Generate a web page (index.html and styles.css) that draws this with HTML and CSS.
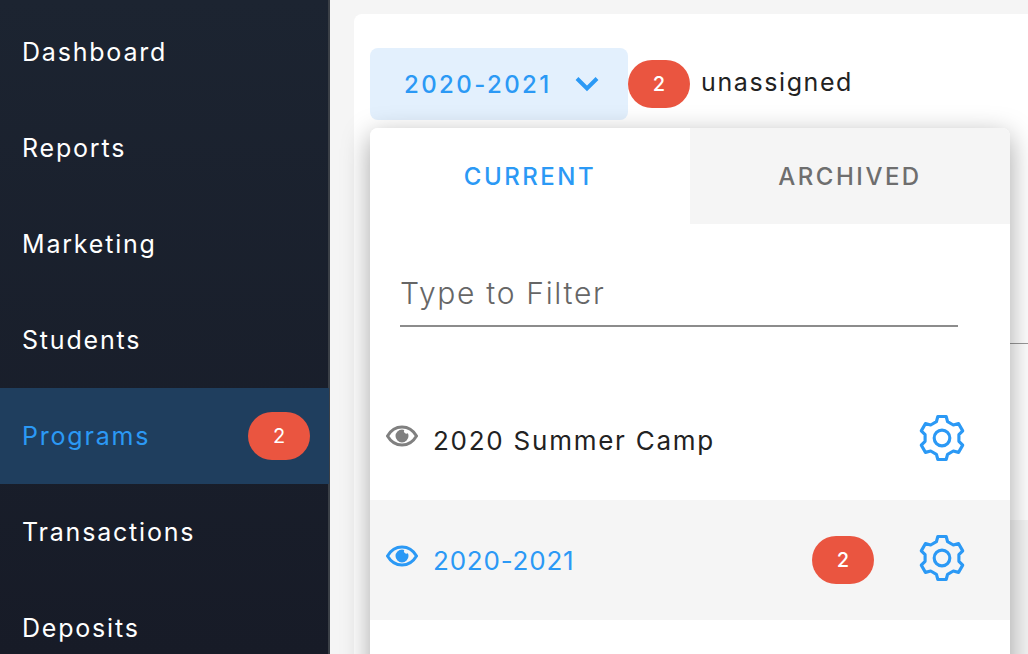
FILE: index.html
```html
<!DOCTYPE html>
<html lang="en">
  <head>
    <meta charset="UTF-8" />
    <title>Programs</title>
    <link rel="stylesheet" href="styles.css">
  </head>
  <body>
    <div class="app">
      <!-- Sidebar -->
      <nav class="sidebar">
        <a class="nav-item">Dashboard</a>
        <a class="nav-item">Reports</a>
        <a class="nav-item">Marketing</a>
        <a class="nav-item">Students</a>
        <a class="nav-item active">Programs <span class="badge">2</span></a>
        <a class="nav-item">Transactions</a>
        <a class="nav-item">Deposits</a>
      </nav>

      <main class="content">
        <div class="card">
          <div class="picker-row">
            <button class="picker">
              2020-2021
              <svg class="chevron" viewBox="0 0 24 16"><path d="M2 2.500 12 12.500 22 2.500" /></svg>
            </button>
            <span class="badge">2</span>
            <span class="unassigned">unassigned</span>
          </div>
          <div class="rule"></div>
          <div class="next-panel"></div>

          <!-- Dropdown -->
          <div class="dropdown">
            <div class="tabs">
              <div class="tab current">CURRENT</div>
              <div class="tab">ARCHIVED</div>
            </div>
            <div class="filter">
              <div class="filter-input">Type to Filter</div>
            </div>
            <div class="program">
              <svg class="eye" viewBox="0 0 32 22"><path class="eye-line" d="M1.5 11C5 5 10 2 16 2s11 3 14.500 9C27 17 22 20 16 20S5 17 1.500 11Z" /><path class="eye-ball" d="M16 4.500a6.500 6.500 0 1 0 6.500 6.500c0-1-.2-1.900-.6-2.700a2.600 2.600 0 0 1-3.700-3.400A6.500 6.500 0 0 0 16 4.500Z" /></svg>
              <span class="program-name">2020 Summer Camp</span>
              <svg class="gear" viewBox="0 0 46 46"><use href="#gear-shape" /></svg>
            </div>
            <div class="program selected">
              <svg class="eye" viewBox="0 0 32 22"><path class="eye-line" d="M1.5 11C5 5 10 2 16 2s11 3 14.500 9C27 17 22 20 16 20S5 17 1.500 11Z" /><path class="eye-ball" d="M16 4.500a6.500 6.500 0 1 0 6.500 6.500c0-1-.2-1.900-.6-2.700a2.600 2.600 0 0 1-3.700-3.400A6.500 6.500 0 0 0 16 4.500Z" /></svg>
              <span class="program-name">2020-2021</span>
              <span class="badge">2</span>
              <svg class="gear" viewBox="0 0 46 46"><use href="#gear-shape" /></svg>
            </div>
          </div>
        </div>
      </main>
    </div>

    <svg class="defs" width="0" height="0">
      <defs>
        <g id="gear-shape">
          <circle cx="23" cy="23" r="7.500" />
          <path d="M17.630 7.400 19 2.390h8l1.370 5.010 5.460 3.150 5.020-1.330 4.010 6.940-3.660 3.690v6.300l3.660 3.690-4.010 6.940-5.020-1.330-5.460 3.150L27 43.610h-8L17.630 38.600l-5.460-3.150-5.020 1.330-4.010-6.940 3.660-3.690v-6.300l-3.660-3.690 4.010-6.940 5.020 1.330Z" />
        </g>
      </defs>
    </svg>
  </body>
</html>
```

FILE: styles.css
```css
* {
  box-sizing: border-box;
}

body {
  margin: 0;
  height: 654px;
  overflow: hidden;
  font-family: "Inter", "Noto Sans", sans-serif;
  background: #f5f5f5;
}

.app {
  display: flex;
  height: 654px;
}

/* Sidebar */
.sidebar {
  width: 330px;
  flex-shrink: 0;
  padding-top: 4px;
  background: linear-gradient(to bottom, #1c2431, #171b27);
  border-right: 2px solid #3b4047;
}

.nav-item {
  display: flex;
  align-items: center;
  justify-content: space-between;
  height: 96px;
  padding: 0 18px 0 22px;
  color: #fff;
  font-size: 25px;
  letter-spacing: 1.800px;
}

.nav-item.active {
  margin-right: -1px;
  padding-right: 19px;
  background: #1f3e5e;
  color: #2b99f5;
}

.badge {
  display: flex;
  align-items: center;
  justify-content: center;
  width: 62px;
  height: 48px;
  border-radius: 24px;
  background: #ea5540;
  color: #fff;
  font-size: 20px;
  font-weight: 500;
  letter-spacing: 0;
}

.nav-item .badge {
  font-weight: 400;
}

/* Main */
.content {
  flex: 1;
  padding: 14px 0 0 24px;
  overflow: hidden;
}

.card {
  position: relative;
  height: 660px;
  padding: 34px 16px 0;
  background: #fff;
  border-radius: 8px 0 0 0;
}

.picker-row {
  display: flex;
  align-items: center;
}

.picker {
  display: flex;
  align-items: center;
  gap: 23px;
  width: 258px;
  height: 72px;
  padding: 0 0 0 34px;
  border: 0;
  border-radius: 8px;
  background: #e3f0fd;
  color: #2b99f5;
  font-family: inherit;
  font-size: 24px;
  font-weight: 500;
  letter-spacing: 2.400px;
}

.chevron {
  width: 24px;
  height: 16px;
  fill: none;
  stroke: #2b99f5;
  stroke-width: 4;
}

.unassigned {
  margin: -4px 0 0 11px;
  color: #222;
  font-size: 25px;
  letter-spacing: 1.600px;
}

.rule {
  position: absolute;
  top: 329px;
  right: 0;
  width: 40px;
  height: 1px;
  background: #999;
}

/* sits behind the dropdown, only its right edge shows */
.next-panel {
  position: absolute;
  top: 506px;
  left: 400px;
  right: 0;
  bottom: 0;
  background: #f5f5f5;
}

/* Dropdown */
.dropdown {
  position: absolute;
  top: 114px;
  left: 16px;
  width: 640px;
  height: 560px;
  overflow: hidden;
  background: #fff;
  border-radius: 8px 8px 0 0;
  box-shadow: 0 8px 28px rgba(0, 0, 0, 0.36);
}

.tabs {
  display: flex;
}

.tab {
  display: flex;
  align-items: center;
  justify-content: center;
  width: 320px;
  height: 96px;
  background: #f5f5f5;
  color: #6e6e6e;
  font-size: 24px;
  font-weight: 500;
  letter-spacing: 2.500px;
}

.tab.current {
  background: #fff;
  color: #2b99f5;
}

.filter {
  height: 156px;
  padding: 32px 52px 0 30px;
}

.filter-input {
  height: 71px;
  padding-top: 19px;
  border-bottom: 2px solid #8c8c8c;
  color: #666;
  font-size: 30px;
  font-weight: 300;
  letter-spacing: 1.700px;
}

.program {
  display: flex;
  align-items: center;
  height: 120px;
  padding: 0 44px 0 16px;
}

.program.selected {
  background: #f5f5f5;
  color: #2b99f5;
}

.eye {
  width: 32px;
  height: 22px;
  margin: -8px 15px 0 0;
  flex-shrink: 0;
}

.eye-line {
  fill: none;
  stroke: #808080;
  stroke-width: 3;
}

.eye-ball {
  fill: #808080;
}

.selected .eye-line {
  stroke: #2b99f5;
}

.selected .eye-ball {
  fill: #2b99f5;
}

.program-name {
  flex: 1;
  color: #222;
  font-size: 26px;
  letter-spacing: 1.750px;
}

.selected .program-name {
  color: #2b99f5;
  letter-spacing: 0.800px;
}

.program .badge {
  margin-right: 44px;
}

.gear {
  width: 48px;
  height: 48px;
  margin-top: -4px;
  fill: none;
  stroke: #2b99f5;
  stroke-width: 3;
  stroke-linejoin: round;
}

.defs {
  position: absolute;
}
```
